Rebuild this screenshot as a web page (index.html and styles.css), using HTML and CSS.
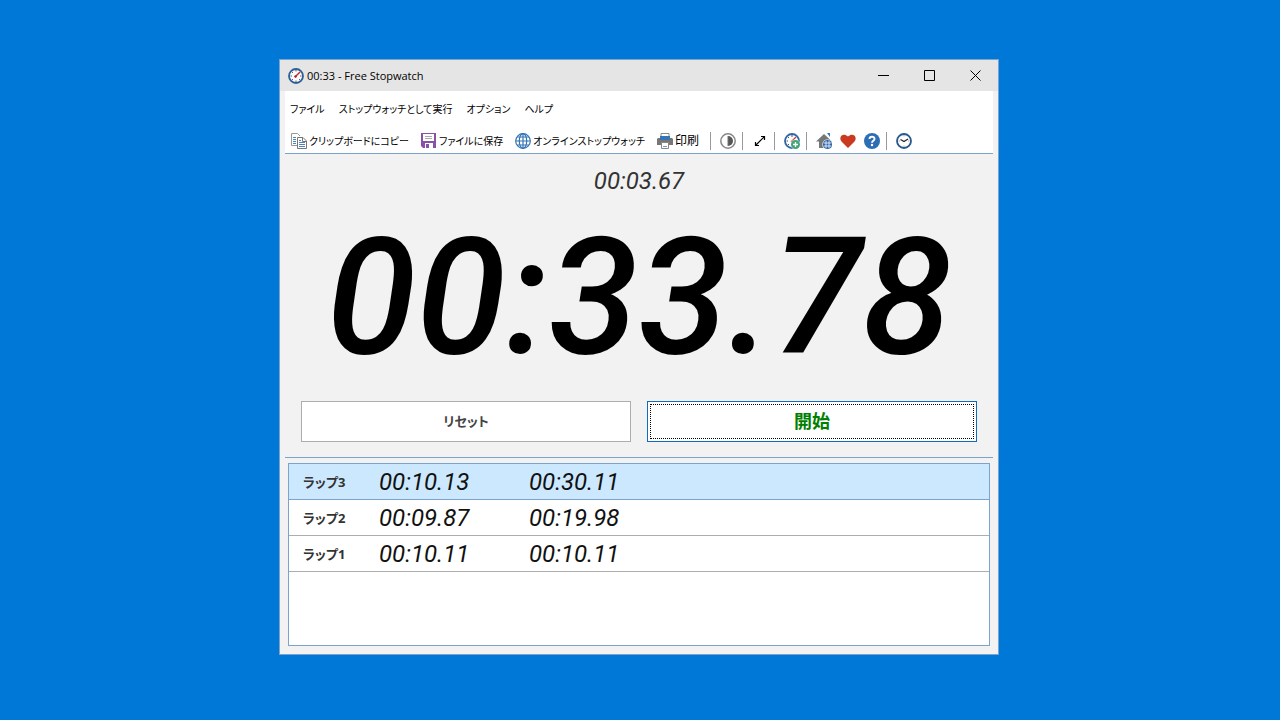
FILE: index.html
```
<!DOCTYPE html>
<html lang="ja">
<head>
<meta charset="utf-8">
<title>00:33 - Free Stopwatch</title>
<link rel="stylesheet" href="styles.css">
</head>
<body>
<main class="window">
  <header class="titlebar">
    <svg class="icon" viewBox="0 0 16 16" aria-hidden="true"><circle cx="8" cy="8" r="7" fill="#f8fafc" stroke="#2d5f96" stroke-width="1.8"/><path d="M8 2v1.500M8 12.500v1.500M2.500 8H4M12 8h1.500M4 4l1 1M4 12l1-1M11 11l1 1" stroke="#555" stroke-width=".9"/><path d="M7 9l5-5" stroke="#d02525" stroke-width="1.400"/><circle cx="7.500" cy="8.500" r="1.200" fill="#b02020"/></svg>
    <h1 class="title">00:33 - Free Stopwatch</h1>
    <div class="caption">
      <button class="caption-button" aria-label="最小化"><svg class="glyph" viewBox="0 0 11 11"><path d="M0 5.500h11"/></svg></button>
      <button class="caption-button" aria-label="最大化"><svg class="glyph" viewBox="0 0 11 11"><path d="M.5.5h10v10H.5z"/></svg></button>
      <button class="caption-button" aria-label="閉じる"><svg class="glyph" viewBox="0 0 11 11"><path d="M.5.5l10 10M10.500.5l-10 10"/></svg></button>
    </div>
  </header>
  <div class="client">
    <nav class="menu">
      <button class="menu-item">ファイル</button>
      <button class="menu-item">ストップウォッチとして実行</button>
      <button class="menu-item">オプション</button>
      <button class="menu-item">ヘルプ</button>
    </nav>
    <div class="toolbar">
      <div class="tool-labels">
        <button class="tool"><svg class="icon" viewBox="0 0 16 16"><path d="M6 12.500H.5V.5h6l2.500 2.500" fill="#fff" stroke="#999"/><path d="M2 4.500h3M2 6.500h3M2 8.500h3M2 10.500h3" stroke="#4f83b8"/><path d="M6.500 4.500h5.500l3.500 3.500v7.500h-9z" fill="#fff" stroke="#777"/><path d="M11.500 4.500v4h4" fill="none" stroke="#777"/><path d="M8 7.500h2M8 9.500h6M8 11.500h6M8 13.500h6" stroke="#4f83b8"/></svg>クリップボードにコピー</button>
        <button class="tool"><svg class="icon" viewBox="0 0 16 16"><path d="M0 0h15v15H2l-2-2z" fill="#8b51a8"/><path d="M2 1h11v7H2zM4 10h8v5H4z" fill="#fff"/><path d="M4 3.500h7M4 5.500h7" stroke="#aaa"/><path d="M5 11h3v4H5z" fill="#8b51a8"/></svg>ファイルに保存</button>
        <button class="tool"><svg class="icon" viewBox="0 0 16 16" fill="none" stroke="#3474b5" stroke-width="1.200"><circle cx="8" cy="8" r="7.300"/><ellipse cx="8" cy="8" rx="3.700" ry="7.300"/><path d="M8 .7v14.600M.7 8h14.600M2 4h12M2 12h12"/></svg>オンラインストップウォッチ</button>
        <button class="tool tool-print"><svg class="icon" viewBox="0 0 16 16"><path d="M4 5V.5h8V5" fill="#fff" stroke="#888"/><path d="M1 5h14l1 1v6H0V6z" fill="#777"/><path d="M3 3h10v4H3z" fill="#3575b5"/><path d="M4.500 9.500h7v6h-7z" fill="#fff" stroke="#888"/><path d="M6 13.500h4" stroke="#6d9bc9"/></svg>印刷</button>
      </div>
      <span class="separator"></span>
      <button class="tool" aria-label="テーマ"><svg class="icon" viewBox="0 0 16 16"><circle cx="8" cy="8" r="7.200" fill="#fff" stroke="#888" stroke-width="1.500"/><path d="M8 3a5 5 0 0 1 0 10z" fill="#555"/><path d="M8 3v10" stroke="#777"/></svg></button>
      <span class="separator"></span>
      <button class="tool" aria-label="拡大"><svg class="icon" viewBox="0 0 16 16" fill="none" stroke="#000" stroke-width="1.200"><path d="M3.500 12.500l9-9M9 3.500h3.500V7M3.500 9v3.500H7"/></svg></button>
      <span class="separator"></span>
      <button class="tool" aria-label="新しいストップウォッチ"><svg class="icon" viewBox="0 0 16 16"><circle cx="8" cy="8" r="7" fill="#fff" stroke="#2d67a5" stroke-width="1.800"/><path d="M8 2v2M2.500 8H4M4 4l1 1M4 12l1-1" stroke="#555"/><path d="M7 9l5-5" stroke="#d33" stroke-width="1.200"/><circle cx="11.500" cy="11.500" r="5" fill="#fff"/><circle cx="11.500" cy="11.500" r="4.500" fill="#3fa373"/><path d="M11.500 9v5M9 11.500h5" stroke="#fff" stroke-width="1.300"/></svg></button>
      <span class="separator"></span>
      <button class="tool" aria-label="ホームページ"><svg class="icon" viewBox="0 0 16 16"><path d="M0 8.500L8 1l8 7.500h-3V15H3V8.500z" fill="#777"/><path d="M11 0h3v4z" fill="#3575b5"/><circle cx="11.500" cy="11.500" r="5.200" fill="#fff"/><circle cx="11.500" cy="11.500" r="4.700" fill="#2e66aa"/><path d="M7.500 10h8M7.500 13h8M10 7.500v8M13 7.500v8" stroke="#fff" stroke-width=".8"/></svg></button>
      <button class="tool" aria-label="寄付"><svg class="icon" viewBox="0 0 16 16"><path d="M8 15L1.500 8.500C-2 4 3-1 8 3.500c5-4.500 10 .5 6.500 5z" fill="#c93a20"/></svg></button>
      <button class="tool" aria-label="ヘルプ"><svg class="icon" viewBox="0 0 16 16"><circle cx="8" cy="8" r="8" fill="#2c6eb4"/><path d="M5.500 6C5.500 3 10.700 3 10.500 6c0 1.800-2.500 1.800-2.500 3.800" fill="none" stroke="#fff" stroke-width="1.900"/><circle cx="8" cy="12" r="1.200" fill="#fff"/></svg></button>
      <span class="separator"></span>
      <button class="tool" aria-label="時計"><svg class="icon" viewBox="0 0 16 16"><circle cx="8" cy="8" r="7" fill="#fff" stroke="#28588c" stroke-width="1.800"/><path d="M8 2v1.500M8 12.500v1.500M2.500 8H4M12 8h1.500" stroke="#aaa"/><path d="M4.500 6.500L8 8.500l4-2.500" fill="none" stroke="#222" stroke-width="1.200"/></svg></button>
    </div>
    <section class="panel">
      <time class="lap-time">00:03.67</time>
      <time class="main-time">00:33.78</time>
      <div class="actions">
        <button class="action">リセット</button>
        <button class="action action-start">開始</button>
      </div>
    </section>
    <div class="list">
      <table class="laps">
        <tr class="lap lap-selected"><th class="lap-name" scope="row">ラップ3</th><td class="lap-value">00:10.13</td><td class="lap-value">00:30.11</td><td></td></tr>
        <tr class="lap"><th class="lap-name" scope="row">ラップ2</th><td class="lap-value">00:09.87</td><td class="lap-value">00:19.98</td><td></td></tr>
        <tr class="lap"><th class="lap-name" scope="row">ラップ1</th><td class="lap-value">00:10.11</td><td class="lap-value">00:10.11</td><td></td></tr>
      </table>
    </div>
  </div>
</main>
</body>
</html>
```
FILE: styles.css
```
* { box-sizing: border-box; }
body {
  margin: 0;
  min-height: 100vh;
  padding: 59px 2px 65px 0;
  display: flex;
  justify-content: center;
  background: #0078d7;
  font-family: "Open Sans", "Noto Sans CJK JP", sans-serif;
  color: #000;
}
button {
  margin: 0;
  padding: 0;
  border: 0;
  background: none;
  color: inherit;
  font-family: inherit;
}
.window {
  width: 100%;
  max-width: 720px;
  display: flex;
  flex-direction: column;
  border: 1px solid #7da2ce;
  background: #f2f2f2;
}
.titlebar {
  display: flex;
  align-items: center;
  height: 31px;
  padding-left: 8px;
  background: #e5e5e5;
}
.icon { display: block; flex: none; width: 16px; height: 16px; }
.title { flex: 1; margin: 0 0 0 3px; font-size: 11px; font-weight: 400; }
.caption { display: flex; }
.caption-button {
  display: flex;
  align-items: center;
  justify-content: center;
  width: 46px;
  height: 31px;
}
.glyph { width: 11px; height: 11px; fill: none; stroke: #000; }
.client { flex: 1; display: flex; flex-direction: column; padding: 0 5px 8px; }
.menu {
  display: flex;
  gap: 14px;
  height: 34px;
  padding-left: 5px;
  background: #fff;
}
.menu-item { font-size: 10px; font-feature-settings: "palt"; white-space: nowrap; }
.toolbar {
  display: flex;
  align-items: center;
  gap: 8px;
  height: 29px;
  padding: 4px 0 0 6px;
  background: #fff;
  border-bottom: 1px solid #7da2ce;
}
.tool-labels { display: flex; gap: 12px; padding-right: 5px; }
.tool {
  display: flex;
  align-items: center;
  gap: 2px;
  font-size: 10px;
  line-height: 16px;
  font-feature-settings: "palt";
  white-space: nowrap;
}
.tool-print { font-size: 12px; }
.separator { width: 1px; height: 18px; margin: 0 1px 0 -2px; background: #999; }
.panel {
  display: flex;
  flex-direction: column;
  align-items: center;
  padding: 13px 16px 15px;
  border-bottom: 1px solid #7da2ce;
}
.lap-time, .main-time, .lap-value { font-family: Roboto, "Liberation Sans", sans-serif; font-style: italic; }
.lap-time { font-size: 24px; line-height: 28px; color: #333; }
.main-time { font-size: 163px; line-height: 206px; font-weight: 500; }
.actions { display: flex; gap: 16px; width: 100%; }
.action {
  flex: 1;
  height: 41px;
  padding-bottom: 3px;
  border: 1px solid #adadad;
  background: #fff;
  color: #444;
  font-size: 13px;
  font-weight: 700;
  font-feature-settings: "palt";
}
.action-start {
  border-color: #0f6cbd;
  outline: 1px dotted #000;
  outline-offset: -4px;
  color: #008000;
  font-size: 18px;
}
.list {
  flex: 1;
  margin: 5px 3px 0;
  border: 1px solid #7da2ce;
  background: #fff;
}
.laps { width: 100%; border-collapse: separate; border-spacing: 0; table-layout: fixed; }
.lap th, .lap td { height: 36px; border-bottom: 1px solid #adadad; }
.lap-selected { background: #cce8ff; }
.lap-selected th, .lap-selected td { border-color: #7da2ce; }
.lap-name {
  width: 90px;
  padding: 0 0 0 14px;
  text-align: left;
  font-size: 13px;
  line-height: 20px;
  color: #333;
  font-feature-settings: "palt";
}
.lap-value { width: 150px; padding: 0; font-size: 24px; line-height: 28px; color: #111; }
```
